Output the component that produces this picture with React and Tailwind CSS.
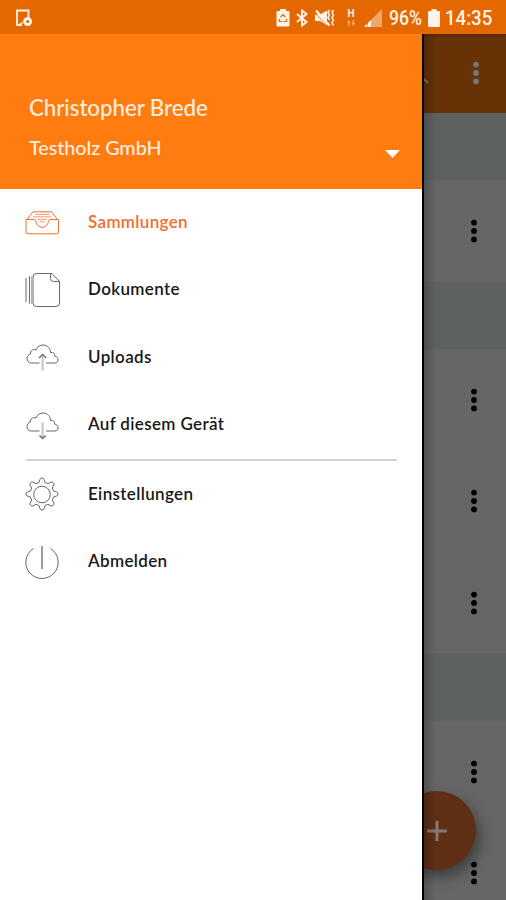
import { useState } from 'react'

const menuItems = [
  { id: 'collections', label: 'Sammlungen', Icon: TrayIcon },
  { id: 'documents', label: 'Dokumente', Icon: DocumentsIcon },
  { id: 'uploads', label: 'Uploads', Icon: CloudUpIcon },
  { id: 'device', label: 'Auf diesem Gerät', Icon: CloudDownIcon },
]

const accountItems = [
  { id: 'settings', label: 'Einstellungen', Icon: GearIcon },
  { id: 'logout', label: 'Abmelden', Icon: PowerIcon },
]

function LineIcon({ children }) {
  return (
    <svg className="w-10 h-10 shrink-0" viewBox="0 0 40 40" fill="none" stroke="currentColor" strokeWidth="1" strokeLinejoin="round">
      {children}
    </svg>
  )
}

function TrayIcon() {
  return (
    <LineIcon>
      <path d="M4 18.500L11 9.800h18.500l7 8.700v11.300a2 2 0 0 1-2 2H6a2 2 0 0 1-2-2z" />
      <path d="M4 17.500h8.500c1 0 1.300.7 1.500 2 .5 3.500 3 5.800 6.200 5.800s5.700-2.300 6.200-5.800c.2-1.300.5-2 1.500-2h8.600" />
      <path d="M13 12.300h14.500M11 14.800h18.500M15.500 17.300h9.500M17.500 19.800h5.500" strokeWidth=".7" />
    </LineIcon>
  )
}

function DocumentsIcon() {
  return (
    <LineIcon>
      <path d="M4 8v24M7.500 6.500v27" />
      <path d="M30 3.500H14.500A3.500 3.500 0 0 0 11 7v26a3.500 3.500 0 0 0 3.500 3.500H34a3.500 3.500 0 0 0 3.500-3.500V11.500z" />
      <path d="M28.500 3.500v5a3 3 0 0 0 3 3h6" />
      <path d="M9.500 6v28" strokeWidth=".5" />
    </LineIcon>
  )
}

function Cloud() {
  return <path d="M17.500 26H8.500C6.500 25.500 5 24 5 21.500c0-2.500 1.500-4 3.500-4.500-.5-3 2.500-5.500 5.500-4 1.500-3.500 4-5 7-5 4.500 0 7.500 3.500 7.500 7.500 3-.5 4.500 1 4 3.500 3 .5 3.500 2.500 3.500 4 0 2-1.500 3-3 3H24" />
}

function CloudUpIcon() {
  return (
    <LineIcon>
      <Cloud />
      <path d="M20.600 33.500V17.500" strokeWidth="2" className="opacity-40" />
      <path d="M17 21l3.600-3.500 3.600 3.500" strokeWidth="1.300" />
    </LineIcon>
  )
}

function CloudDownIcon() {
  return (
    <LineIcon>
      <Cloud />
      <path d="M20.600 17.500v15" strokeWidth="2" className="opacity-40" />
      <path d="M17.500 30.500l3.100 3 3.100-3" strokeWidth="1.500" />
    </LineIcon>
  )
}

function GearIcon() {
  return (
    <LineIcon>
      <circle cx="20" cy="20.500" r="8.300" />
      {/* eight rounded teeth */}
      <path d="M17 8.500l1-3.300q.3-1.200 2-1.200t2 1.200l1 3.300q1.500.4 3 1.200l3-1.600q1.100-.6 2.300.6t.6 2.300l-1.600 3q.8 1.500 1.200 3l3.300 1q1.200.3 1.200 2t-1.200 2l-3.300 1q-.4 1.500-1.200 3l1.600 3q.6 1.100-.6 2.300t-2.300.6l-3-1.600q-1.500.8-3 1.200l-1 3.300q-.3 1.200-2 1.200t-2-1.200l-1-3.300q-1.500-.4-3-1.200l-3 1.600q-1.100.6-2.300-.6t-.6-2.300l1.600-3q-.8-1.500-1.200-3l-3.300-1q-1.200-.3-1.200-2t1.200-2l3.300-1q.4-1.500 1.200-3l-1.600-3q-.6-1.100.6-2.300t2.300-.6l3 1.600q1.500-.8 3-1.200z" />
    </LineIcon>
  )
}

function PowerIcon() {
  return (
    <LineIcon>
      <path d="M20 4v23" strokeWidth="1.300" />
      <path d="M11.500 6.500a16.200 16.200 0 1 0 17 0" />
    </LineIcon>
  )
}

function MoreDots({ className }) {
  return (
    <svg className={className} viewBox="0 0 8 24" fill="currentColor">
      <circle cx="4" cy="3.600" r="2.900" />
      <circle cx="4" cy="12" r="2.900" />
      <circle cx="4" cy="20.400" r="2.900" />
    </svg>
  )
}

function StatusBar() {
  return (
    <div className="h-[34px] shrink-0 bg-[#e56700] text-[#fff3ea] flex items-center pl-4 pr-[14px] pt-[2px]">
      <svg className="w-[17px] h-[18px]" viewBox="0 0 17 18" fill="none" stroke="currentColor" strokeWidth="1.800">
        <path d="M6 16H1V1.500h11.500v7" />
        <path d="M3 15.500l4-2" strokeWidth="1.200" />
        <circle cx="11.600" cy="12.500" r="3" strokeWidth="3" />
      </svg>
      <div className="ml-auto flex items-center">
        {/* battery saver */}
        <svg className="w-[14px] h-[18px]" viewBox="0 0 14 18">
          <path d="M4 0h6v2h2.500q1 0 1 1v13.500q0 1-1 1h-11q-1 0-1-1V3q0-1 1-1H4z" fill="currentColor" />
          <path d="M4.500 8L7 5.500l2.500 2.500M3.500 10v2.500h3M10.500 10v2.500h-3" fill="none" stroke="#e56700" strokeWidth="1.200" />
        </svg>
        <svg className="ml-[6px] w-[12px] h-[18px]" viewBox="0 0 12 18" fill="none" stroke="currentColor" strokeWidth="2">
          <path d="M1 5l9.500 8L6 16.500v-15L10.500 5 1 13" />
        </svg>
        {/* muted speaker */}
        <svg className="ml-[7px] w-[20px] h-[18px]" viewBox="0 0 20 18">
          <path d="M0 5.500h5l7-4v15l-7-4.500H0z" fill="currentColor" />
          <path d="M0 4l12 13" stroke="#e56700" strokeWidth=".8" />
          <path d="M1 1.500l13.500 15" stroke="currentColor" strokeWidth="2.200" />
          <path d="M14.500 1l-1.500 2.500 1.500 2.500-1.500 2.500 1.500 2.500M18.500 1L17 3.500 18.500 6 17 8.500l1.500 2.500-1.500 2.500 1.500 3" fill="none" stroke="currentColor" strokeWidth="1.500" />
        </svg>
        <div className="ml-[12px] w-2 h-[17px] flex flex-col items-center font-['Roboto',sans-serif] font-bold text-[10px] leading-[8px]">
          <span>H</span>
          <svg className="mt-[2px] w-2 h-[6px] opacity-50" viewBox="0 0 8 6" fill="currentColor">
            <path d="M0 3l1.700-3 1.800 3H2.400v3H1V3zM4.500 3h1.100V0H7v3h1L6.300 6z" />
          </svg>
        </div>
        <svg className="ml-[9px] w-[18px] h-[18px]" viewBox="0 0 18 18" fill="currentColor">
          <path d="M0 18L18 0v18z" opacity=".45" />
          <path d="M0 18l3-3v3zM4 18v-4l3-3v7z" />
        </svg>
        <span className="ml-[7px] w-[35px] whitespace-nowrap font-['Roboto',sans-serif] font-medium text-[20.500px] leading-[32px] origin-left scale-x-[0.86]">96%</span>
        <svg className="ml-[4px] w-[12px] h-[18px]" viewBox="0 0 12 18" fill="currentColor">
          <path d="M3.500 0h5v2H11q1 0 1 1v14q0 1-1 1H1q-1 0-1-1V3q0-1 1-1h2.500z" />
        </svg>
        <span className="ml-[5px] w-[47px] whitespace-nowrap font-['Roboto',sans-serif] font-medium text-[20.500px] leading-[32px] origin-left scale-x-[0.91]">14:35</span>
      </div>
    </div>
  )
}

function MenuRow({ item, active, onClick }) {
  const { Icon, label } = item
  return (
    <button
      className={`flex items-center w-full h-[67.5px] pl-[22px] text-left ${active ? 'text-[#f26d2b]' : 'text-[#181818]'}`}
      onClick={onClick}
    >
      <span className={active ? '' : 'text-[#666]'}><Icon /></span>
      <span className="ml-[26px] -mt-px text-[17px] font-semibold leading-6 tracking-[0.35px] whitespace-nowrap">{label}</span>
    </button>
  )
}

function Drawer() {
  const [selected, setSelected] = useState('collections')

  const renderRow = item => (
    <MenuRow key={item.id} item={item} active={item.id === selected} onClick={() => setSelected(item.id)} />
  )

  return (
    <aside className="w-[424px] shrink-0 bg-white border-r-2 border-black">
      <div className="h-[154.5px] bg-[#ff7c10] text-[#ffede0] flex justify-between pl-[29px] pr-[22px]">
        <div className="pt-[58px]">
          <div className="text-[22.300px] leading-[32px] font-medium tracking-[-0.05px]">Christopher Brede</div>
          <div className="mt-[7px] text-[19.800px] leading-[32px] font-medium tracking-[-0.05px]">Testholz GmbH</div>
        </div>
        <svg className="mt-[116px] w-[15px] h-[8px]" viewBox="0 0 15 8">
          <path d="M0 0h15L7.500 8z" fill="#fff" />
        </svg>
      </div>
      <nav>
        {menuItems.map(renderRow)}
        <div className="ml-[26px] w-[371px] h-[2px] bg-[#d2d2d2]" />
        {accountItems.map(renderRow)}
      </nav>
    </aside>
  )
}

function ListRow() {
  return (
    <div className="h-[101.4px] flex items-center justify-end pr-7 bg-[#666]">
      <MoreDots className="w-2 h-6 text-black" />
    </div>
  )
}

function Band() {
  return <div className="h-[67.500px] bg-[#5e6162]" />
}

// list behind the open drawer, dimmed
function Background() {
  return (
    <main className="relative flex-1 overflow-hidden bg-[#666]">
      <div className="h-[78.800px] flex items-center justify-between pr-[26px] bg-[#663206]">
        <svg className="w-[5px] h-[6px] mt-[16px]" viewBox="0 0 5 6">
          <path d="M0 1l4 4" stroke="#777b70" strokeWidth="2" />
        </svg>
        <MoreDots className="w-2 h-6 text-[#777]" />
      </div>
      <Band />
      <ListRow />
      <Band />
      <ListRow />
      <ListRow />
      <ListRow />
      <Band />
      <ListRow />
      <ListRow />
      <button className="absolute left-[-27px] top-[757px] w-[79px] h-[79px] rounded-full bg-[#5f2f15] shadow-[4px_7px_14px_rgba(0,0,0,0.4)] flex items-center justify-center">
        <svg className="w-5 h-5" viewBox="0 0 20 20" stroke="#85796f" strokeWidth="3">
          <path d="M10 0v20M0 10h20" />
        </svg>
      </button>
      <div className="absolute left-0 top-0 w-3 h-full bg-linear-to-r from-black/20 to-transparent" />
      <div className="absolute left-0 top-0 w-full h-1 bg-linear-to-b from-black/20 to-transparent" />
    </main>
  )
}

export default function App() {
  return (
    <div className="w-[506px] h-[900px] overflow-hidden flex flex-col font-['Lato',sans-serif]">
      <StatusBar />
      <div className="flex flex-1 min-h-0">
        <Drawer />
        <Background />
      </div>
    </div>
  )
}
